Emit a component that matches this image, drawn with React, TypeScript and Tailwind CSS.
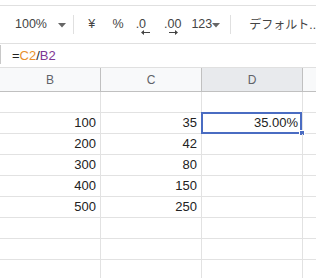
import { FC } from 'react';

const FONT = "font-['Liberation_Sans','Noto_Sans_CJK_JP',sans-serif]";

const ROWS: [string, string, string][] = [
  ['', '', ''],
  ['100', '35', '35.00%'],
  ['200', '42', ''],
  ['300', '80', ''],
  ['400', '150', ''],
  ['500', '250', ''],
  ['', '', ''],
  ['', '', ''],
  ['', '', ''],
];

const Caret: FC = () => (
  <svg width="8" height="5" viewBox="0 0 8 5" className="fill-[#666]">
    <path d="M0 0h8L4 4.5z" />
  </svg>
);

const App: FC = () => {
  return (
    <div className={`w-[316px] h-[278px] overflow-hidden bg-white ${FONT}`}>
      {/* toolbar */}
      <div className="h-[5px]" />
      <div className="h-[39px] border-t border-b border-[#e0e0e0] flex items-center text-[#444] text-[12.5px] whitespace-nowrap">
        <span className="ml-[15px] w-[30px]">100%</span>
        <span className="ml-[13px] mt-[2px]">
          <Caret />
        </span>
        <div className="ml-[7px] w-px h-[19px] bg-[#e0e0e0]" />
        <span className="ml-[11px] w-[14px] text-center">¥</span>
        <span className="ml-[13px] w-[14px] text-center">%</span>
        <span className="ml-[11px] w-[14px] relative">
          .0
          <svg width="9" height="5" viewBox="0 0 9 5" className="absolute left-[5px] top-[15px] fill-[#444]">
            <path d="M0 2.5L3 0v2h6v1H3v2z" />
          </svg>
        </span>
        <span className="ml-[15px] w-[18px] relative">
          .00
          <svg width="9" height="5" viewBox="0 0 9 5" className="absolute left-[5px] top-[15px] fill-[#444]">
            <path d="M9 2.5L6 0v2H0v1h6v2z" />
          </svg>
        </span>
        <span className="ml-[10px] w-[20px]">123</span>
        <span className="ml-[1px] mt-[2px]">
          <Caret />
        </span>
        <div className="ml-[10px] w-px h-[19px] bg-[#e0e0e0]" />
        <span className="ml-[18px] text-[12px]">デフォルト..</span>
      </div>

      {/* formula bar */}
      <div className="h-[24px] border-b border-[#e0e0e0] flex items-center">
        <div className="w-px h-[19px] bg-[#c8c8c8] self-start mt-[1px]" />
        <span className="ml-[11px] text-[13px] text-[#222]">
          =<span className="text-[#e8912d]">C2</span>/<span className="text-[#7e3794]">B2</span>
        </span>
      </div>

      {/* grid */}
      <div className="grid grid-cols-[101px_101px_101px_1fr] text-[13px] text-[#222]">
        <div className="h-[24px] bg-[#f8f9fa] border-r border-b border-[#c0c0c0] flex items-center justify-center text-[12px] text-[#5f6368]">B</div>
        <div className="h-[24px] bg-[#f8f9fa] border-r border-b border-[#c0c0c0] flex items-center justify-center text-[12px] text-[#5f6368]">C</div>
        <div className="h-[24px] bg-[#e8eaed] border-r border-b border-[#c0c0c0] flex items-center justify-center text-[12px] text-[#5f6368]">D</div>
        <div className="h-[24px] bg-[#f8f9fa] border-b border-[#c0c0c0]" />
        {ROWS.map((row, i) => (
          <div key={i} className="contents">
            <div className="h-[21px] border-r border-b border-[#e2e2e2] flex items-center justify-end pr-[4px]">{row[0]}</div>
            <div className="h-[21px] border-r border-b border-[#e2e2e2] flex items-center justify-end pr-[4px]">{row[1]}</div>
            <div className="relative h-[21px] border-r border-b border-[#e2e2e2] flex items-center justify-end pr-[4px]">
              {row[2]}
              {i === 1 && (
                <>
                  <div className="absolute left-[-1px] top-[-1px] w-[101px] h-[22px] border-2 border-[#4a6cc2]" />
                  <div className="absolute left-[97px] top-[17px] w-[6px] h-[6px] bg-[#4a6cc2] border border-white" />
                </>
              )}
            </div>
            <div className="h-[21px] border-b border-[#e2e2e2]" />
          </div>
        ))}
      </div>
    </div>
  );
};

export default App;
